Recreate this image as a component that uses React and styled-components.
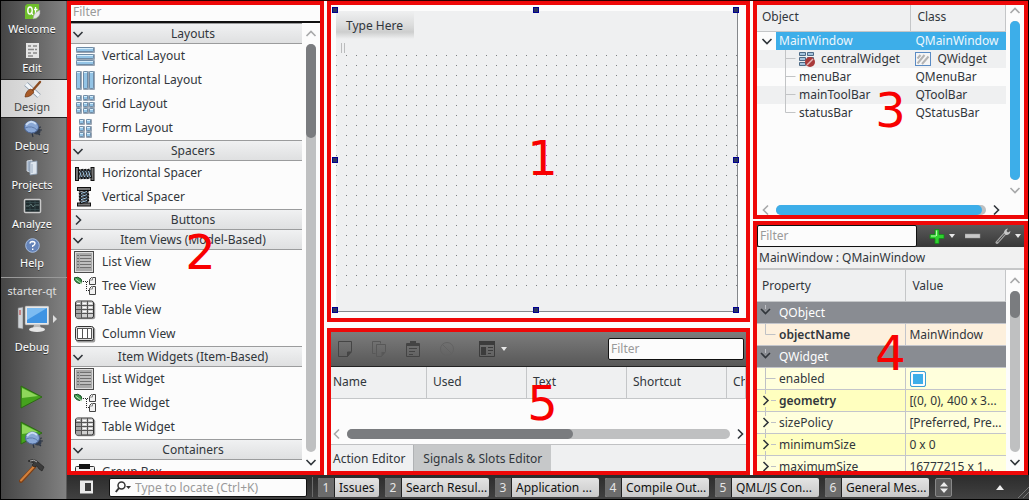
import React from "react";
import styled, { createGlobalStyle, css } from "styled-components";

const Global = createGlobalStyle`
  *, *::before, *::after { box-sizing: border-box; }
  body { margin: 0; background: #000; }
  body, button, input {
    font-family: "Noto Sans", "Open Sans", sans-serif;
    font-size: 12px;
    color: #31363b;
  }
  button { border: 0; padding: 0; background: none; text-align: left; }
  table { border-collapse: separate; border-spacing: 0; table-layout: fixed; width: 100%; }
  th { font-weight: 400; text-align: left; }
  svg { display: block; flex: none; }
`;

/* ---------- page skeleton ---------- */

const Shell = styled.div`
  display: grid;
  grid-template-columns: 67px minmax(0, 1fr);
  height: 100vh;
  min-height: 400px;
  padding-bottom: 1px;
  overflow: hidden;
`;

const Workspace = styled.main`
  display: flex;
  flex-direction: column;
  min-height: 0;
`;

const Docks = styled.div`
  flex: 1;
  min-height: 0;
  display: grid;
  grid-template-columns: 257px minmax(0, 1fr) 275px;
  gap: 3px;
  padding-top: 1px;
  background: linear-gradient(#300 0 1px, #fcfcfc 1px);
  border-right: 1px solid #000;
`;

const DockColumn = styled.div`
  display: grid;
  grid-template-rows: ${(p) => p.$rows};
  gap: ${(p) => p.$gap};
  min-height: 0;
`;

const Frame = styled.section`
  position: relative;
  display: flex;
  flex-direction: column;
  min-width: 0;
  min-height: 0;
  overflow: hidden;
  border: 4px solid #ee0808;
  background: #fcfcfc;
`;

const Callout = styled.span`
  position: absolute;
  left: ${(p) => p.$x || "50%"};
  top: ${(p) => p.$y || "50%"};
  transform: translate(-50%, -50%);
  font: 48px/56px "DejaVu Sans", sans-serif;
  color: #f80000;
  pointer-events: none;
`;

/* ---------- mode bar ---------- */

const ModeBar = styled.nav`
  display: flex;
  flex-direction: column;
  border: solid #000;
  border-width: 1px 0 0 1px;
  background: linear-gradient(90deg, #454545, #828282);
  box-shadow: inset -1px 0 #5a5a5a;
  min-height: 0;
`;

const ModeButton = styled.button`
  display: flex;
  flex-direction: column;
  align-items: center;
  justify-content: flex-end;
  height: 39px;
  padding: 0 4px 4px 0;
  color: #fff;
  line-height: 15px;
  font-size: 11px;
  text-shadow: 0 1px #333;
  ${(p) =>
    p.$active &&
    css`
      padding-bottom: 3px;
      color: #444;
      text-shadow: none;
      background: linear-gradient(90deg, #cfcfcf, #ececec);
      border: solid #222;
      border-width: 1px 0;
    `}
`;

const KitButton = styled.button`
  display: flex;
  flex-direction: column;
  align-items: center;
  gap: 6px;
  margin-top: 3px;
  padding: 5px 4px 29px 0;
  border-top: 1px solid #999;
  color: #e0e0e0;
  font-size: 11px;
  line-height: 16px;
  strong { color: #fff; font-weight: 400; text-shadow: 0 1px #333; }
`;

const KitIcon = styled.span`
  display: flex;
  align-items: center;
  gap: 4px;
  padding-left: 10px;
`;

const RunActions = styled.div`
  display: flex;
  flex-direction: column;
  align-items: center;
  gap: 10px;
  padding-right: 4px;
`;

/* ---------- shared controls ---------- */

const FilterInput = styled.input`
  display: block;
  flex: none;
  width: ${(p) => p.$width || "100%"};
  height: ${(p) => p.$height || "22px"};
  padding: 0 2px 2px;
  border: 1px solid #111;
  border-radius: 2px;
  background: #fcfcfc;
  outline: 0;
  &::placeholder { color: #9a9a9a; opacity: 1; }
`;

const Body = styled.div`
  display: flex;
  flex: 1;
  min-height: 0;
`;

const Clip = styled.div`
  flex: 1;
  min-width: 0;
  min-height: 0;
  overflow: hidden;
`;

const ScrollTrackBox = styled.div`
  display: flex;
  flex-direction: ${(p) => (p.$horizontal ? "row" : "column")};
  align-items: center;
  gap: 4px;
  flex: none;
  padding: ${(p) => p.$pad || (p.$horizontal ? "0 4px" : "5px 0 3px")};
  ${(p) => (p.$horizontal ? "height: 20px;" : "width: 18px;")}
`;

const Track = styled.div`
  flex: 1;
  display: flex;
  flex-direction: ${(p) => (p.$horizontal ? "row" : "column")};
  border-radius: 5px;
  background: #bfc0c1;
  ${(p) => (p.$horizontal ? "height: 10px;" : "width: 10px;")}
`;

const Thumb = styled.div`
  border-radius: 5px;
  background: ${(p) => (p.$blue ? "#3daee9" : "#7a7c7f")};
  flex: 0 0 ${(p) => p.$size};
`;

const chevronPaths = {
  up: "M1.5 8 L6 3.5 L10.5 8",
  down: "M1.5 4 L6 8.5 L10.5 4",
  left: "M8 1.5 L3.5 6 L8 10.5",
  right: "M4 1.5 L8.5 6 L4 10.5",
};

const Chevron = ({ dir, color = "#31363b" }) => (
  <svg width="12" height="12" viewBox="0 0 12 12" aria-hidden="true">
    <path d={chevronPaths[dir]} fill="none" stroke={color} strokeWidth="1.6" />
  </svg>
);

const Scrollbar = ({ horizontal, size, blue, atEnd, pad }) => (
  <ScrollTrackBox $horizontal={horizontal} $pad={pad}>
    <Chevron dir={horizontal ? "left" : "up"} color="#a8a9aa" />
    <Track $horizontal={horizontal}>
      <Thumb $size={size} $blue={blue} />
    </Track>
    <Chevron dir={horizontal ? "right" : "down"} color={atEnd ? "#a8a9aa" : "#31363b"} />
  </ScrollTrackBox>
);

/* ---------- widget box ---------- */

const WidgetFilter = styled(FilterInput)`
  border-width: 0 0 2px;
  border-radius: 0;
  padding-bottom: 3px;
`;

const GroupHeader = styled.button`
  display: flex;
  align-items: center;
  width: 100%;
  height: 21px;
  padding-left: 1px;
  border: solid #9b9c9d;
  border-width: 1px 0;
  background: linear-gradient(#f0f1f2, #dfe0e1);
  & + & { margin-top: -1px; }
  span { flex: 1; text-align: center; }
`;

const WidgetItem = styled.div`
  display: flex;
  align-items: center;
  gap: 6px;
  height: 24px;
  padding: 0 0 1px 3px;
`;

const Glyph = ({ children, w = 22, h = 22 }) => (
  <svg width={w} height={h} viewBox={`0 0 ${w} ${h}`} aria-hidden="true">
    {children}
  </svg>
);

const BlueCells = ({ cells }) => (
  <Glyph>
    {cells.map(([x, y, w, h]) => (
      <g key={`${x}-${y}`}>
        <rect x={x} y={y} width={w + 1} height={h + 1} rx="1" fill="#7f8ea0" opacity=".8" />
        <rect x={x + 0.5} y={y + 0.5} width={w - 1} height={h - 1} rx="1" fill="#93c4e6" stroke="#6d8aa5" />
        <path d={`M${x + 1} ${y + 1.5} h${w - 2}`} stroke="#d8eefb" />
      </g>
    ))}
  </Glyph>
);

const verticalCells = [2, 9, 15].map((y) => [2, y, 18, 5]);
const horizontalCells = [2, 9, 15].map((x) => [x, 2, 5, 18]);
const gridCells = [2, 9, 15].flatMap((y) => [2, 9, 15].map((x) => [x, y, 5, 5]));
const formCells = [2, 9, 15].flatMap((y) => [5, 12].map((x) => [x, y, 5, 5]));

const Spring = () => (
  <>
    <rect x="2.5" y="5.5" width="3" height="13" fill="#777" stroke="#111" />
    <rect x="18" y="5.5" width="3" height="13" fill="#777" stroke="#111" />
    <path d="M6 7.5 L9 17 M9 7 L12 17 M12 7 L15 17 M15 7 L18 16" stroke="#111" strokeWidth="2.6" />
    <path d="M6.5 17 L9 8 M9.5 17 L12 8 M12.5 17 L15 8 M15.5 17 L17.5 8" stroke="#29343f" strokeWidth="1.2" />
    <path d="M6.5 9 L8.5 15 M9.6 9 L11.6 15 M12.7 9 L14.7 15 M15.5 9 L17.4 15" stroke="#a9cde8" />
  </>
);

const icons = {
  vertical: <BlueCells cells={verticalCells} />,
  horizontal: <BlueCells cells={horizontalCells} />,
  grid: <BlueCells cells={gridCells} />,
  form: <BlueCells cells={formCells} />,
  hspacer: <Glyph><g transform="translate(-1 0)"><Spring /></g></Glyph>,
  vspacer: <Glyph><g transform="translate(-1 0) rotate(90 11 11) translate(-1 -1)"><Spring /></g></Glyph>,
  list: (
    <Glyph>
      <rect x=".5" y=".5" width="19" height="21" fill="#a9a9a9" stroke="#4c4c4c" />
      <rect x="1.5" y="1.5" width="17" height="19" fill="none" stroke="#dcdcdc" />
      <path d="M3 4.5h2M3 7.5h2M3 10.5h2M3 13.5h2M3 16.5h2M6 4.5h11M6 7.5h11M6 10.5h11M6 13.5h11M6 16.5h11" stroke="#707070" />
      <path d="M6 6h11M6 9h11M6 12h11M6 15h11" stroke="#d2d2d2" />
    </Glyph>
  ),
  tree: (
    <Glyph>
      <path d="M0 3 Q4 1 7 4 Q9 7 6 8.5 Q1 8 0 3Z" fill="#3f9c4e" stroke="#174b22" />
      <path d="M1.5 4 L8 9" stroke="#b7e5b8" />
      <path d="M9 6.5h6M12.5 7v9M12 15.5h3" fill="none" stroke="#222" strokeDasharray="1 1" />
      <path d="M15.5 4.5 l2-2 h4 v7 h-6z M15.5 13.5 l2-2 h4 v8 h-6z" fill="#f2f2f2" stroke="#444" />
      <path d="M18.5 2v3h-3M18.5 11v3h-3" fill="none" stroke="#888" />
    </Glyph>
  ),
  table: (
    <Glyph>
      <rect x="2.2" y="3.2" width="19" height="17" rx="2" fill="#999" />
      <rect x="1.5" y="2" width="18" height="17" rx="2" fill="#d0d0d0" stroke="#333" />
      <rect x="2" y="2.5" width="5" height="16" fill="#a6a6a6" />
      <path d="M2 6.5h17M2 10.5h17M2 14.5h17M7.5 2v17M13.5 2v17" stroke="#555" />
      <path d="M3 4.5h3M9 4.5h3M15 4.5h3M9 8.5h3M15 8.5h3M9 12.5h3M15 12.5h3" stroke="#fff" />
    </Glyph>
  ),
  column: (
    <Glyph>
      <rect x="2.2" y="4.5" width="19" height="15" rx="2" fill="#999" />
      <rect x="1.5" y="3.5" width="18" height="14" rx="2" fill="#e0e0e0" stroke="#333" />
      <rect x="3.5" y="5.5" width="14" height="10" fill="#fff" stroke="#555" />
      <path d="M8.5 6v9M13.5 6v9" stroke="#555" />
    </Glyph>
  ),
  group: (
    <Glyph>
      <rect x="1.5" y="5.5" width="19" height="15" rx="1" fill="#eee" stroke="#333" />
      <rect x="5" y="3" width="11" height="5" fill="#111" />
    </Glyph>
  ),
};

const widgetGroups = [
  { title: "Layouts", items: [["vertical", "Vertical Layout"], ["horizontal", "Horizontal Layout"], ["grid", "Grid Layout"], ["form", "Form Layout"]] },
  { title: "Spacers", items: [["hspacer", "Horizontal Spacer"], ["vspacer", "Vertical Spacer"]] },
  { title: "Buttons", closed: true, items: [] },
  { title: "Item Views (Model-Based)", items: [["list", "List View"], ["tree", "Tree View"], ["table", "Table View"], ["column", "Column View"]] },
  { title: "Item Widgets (Item-Based)", items: [["list", "List Widget"], ["tree", "Tree Widget"], ["table", "Table Widget"]] },
  { title: "Containers", items: [["group", "Group Box"]] },
];

const WidgetBox = () => (
  <Frame aria-label="Widget box">
    <WidgetFilter $height="18px" placeholder="Filter" aria-label="Filter widgets" />
    <Body>
      <Clip>
        {widgetGroups.map((g) => (
          <React.Fragment key={g.title}>
            <GroupHeader aria-expanded={!g.closed}>
              <Chevron dir={g.closed ? "right" : "down"} />
              <span>{g.title}</span>
            </GroupHeader>
            {g.items.map(([icon, label]) => (
              <WidgetItem key={label}>
                {icons[icon]}
                {label}
              </WidgetItem>
            ))}
          </React.Fragment>
        ))}
      </Clip>
      <Scrollbar size="23%" />
    </Body>
    <Callout $x="52%" $y="53%">2</Callout>
  </Frame>
);

/* ---------- form canvas ---------- */

const Canvas = styled.div`
  position: relative;
  flex: 1;
  display: flex;
  flex-direction: column;
  margin: 6px 8px 6px 5px;
  border: solid #85888c;
  border-width: 0 1px 1px 0;
  background: #eff0f1;
`;

const TypeHere = styled.button`
  align-self: flex-start;
  height: 28px;
  padding: 0 11px 0 10px;
  background: linear-gradient(#eff0f1, #dcdddd 50%, #cdcece 75%, #eff0f1);
`;

const ToolGrip = styled.div`
  width: 4px;
  height: 10px;
  margin: 4px 5px 2px;
  border: solid #bbbcbd;
  border-width: 0 1px;
`;

const DotPattern = styled.svg`
  flex: 1;
  width: 100%;
  min-height: 0;
  margin-bottom: 24px;
`;

const Handle = styled.i`
  position: absolute;
  left: ${(p) => p.$x};
  top: ${(p) => p.$y};
  width: 6px;
  height: 6px;
  margin: -4px 0 0 -4px;
  background: #2b3560;
  border: 1px solid #000090;
`;

const handleSpots = [
  ["0%", "0%"], ["50%", "0%"], ["100%", "0%"], ["0%", "50%"],
  ["100%", "50%"], ["0%", "100%"], ["50%", "100%"], ["100%", "100%"],
];

const FormEditor = () => (
  <Frame aria-label="Form editor">
    <Canvas>
      <TypeHere>Type Here</TypeHere>
      <ToolGrip />
      <DotPattern aria-hidden="true">
        <defs>
          <pattern id="dots" width="10" height="10" patternUnits="userSpaceOnUse">
            <rect width="1" height="1" fill="#7c7f82" />
          </pattern>
        </defs>
        <rect width="100%" height="100%" fill="url(#dots)" />
      </DotPattern>
      {handleSpots.map(([x, y]) => (
        <Handle key={x + y} $x={x} $y={y} />
      ))}
    </Canvas>
    <Callout $x="51%" $y="49%">1</Callout>
  </Frame>
);

/* ---------- action editor ---------- */

const ActionToolbar = styled.div`
  display: flex;
  align-items: center;
  gap: 18px;
  height: 35px;
  flex: none;
  padding: 0 2px 0 6px;
  border-bottom: 1px solid #222;
  background: linear-gradient(#7c7c7c, #585858);
`;

const ToolButton = styled.button`
  display: flex;
  align-items: center;
  gap: ${(p) => p.$gap || "4px"};
`;

const Spacer = styled.span`
  flex: 1;
`;

const Th = styled.th`
  width: ${(p) => p.$width || "auto"};
  height: ${(p) => p.$height || "32px"};
  padding: ${(p) => p.$pad || "0 0 2px 6px"};
  border: solid #c4c6c8;
  border-width: 0 1px 1px 0;
  background: #eff0f1;
  white-space: nowrap;
`;

const Tabs = styled.div`
  display: flex;
  height: 27px;
  flex: none;
  border-top: 1px solid #c0c1c3;
  background: #eff0f1;
`;

const Tab = styled.button`
  padding: ${(p) => (p.$active ? "0 8px 0 2px" : "0 9px")};
  background: ${(p) => (p.$active ? "#eff0f1" : "#c6c8c9")};
  border-left: ${(p) => (p.$active ? "0" : "1px solid #b0b2b4")};
`;

const ActionArea = styled.div`
  flex: 1;
`;

const Caret = ({ color = "#e8e8e8" }) => (
  <svg width="6" height="4" viewBox="0 0 6 4" aria-hidden="true">
    <path d="M0 0h6L3 4z" fill={color} />
  </svg>
);

const ActionEditor = () => (
  <Frame aria-label="Action editor">
    <ActionToolbar>
      <ToolButton aria-label="New action">
        <Glyph w={16} h={16}><path d="M1.5.5h13v10l-4 5h-9z M10.5 15.5v-4.5h4" fill="none" stroke="#454545" /><path d="M10.5 11h4l-4 4.5z" fill="#454545" /></Glyph>
      </ToolButton>
      <ToolButton aria-label="Copy">
        <Glyph w={16} h={16}><path d="M1.5.5h8v2M1.5.5v12h3M5.5 3.5h9v7l-4 5h-5z" fill="none" stroke="#585858" /><path d="M10.5 11h4l-4 4.5z" fill="#585858" /></Glyph>
      </ToolButton>
      <ToolButton aria-label="Paste">
        <Glyph w={16} h={16}><path d="M1.5 2.5h13v13h-13z" fill="none" stroke="#444" /><path d="M2 2h3V0h6v2h3v3H2z" fill="#444" /><path d="M4 7.5h8M4 10.5h6M4 13.5h4" stroke="#444" /></Glyph>
      </ToolButton>
      <ToolButton aria-label="Delete">
        <Glyph w={16} h={16}><circle cx="8" cy="8" r="6.5" fill="none" stroke="#626262" /><path d="M3.5 3.5l9 9" stroke="#626262" /></Glyph>
      </ToolButton>
      <ToolButton aria-label="Configure" $gap="6px">
        <Glyph w={22} h={16}><path d="M6.5 .5h15v15h-15z" fill="none" stroke="#3c3c3c" /><path d="M6 0h16v4H6zM8 6h5v8H8z" fill="#3c3c3c" /><path d="M15 6.5h5M15 9.5h5M15 12.5h3" stroke="#3c3c3c" /></Glyph>
        <Caret />
      </ToolButton>
      <Spacer />
      <FilterInput $width="136px" placeholder="Filter" aria-label="Filter actions" />
    </ActionToolbar>
    <table>
      <thead>
        <tr>
          <Th $width="96px" $pad="0 0 2px 2px">Name</Th>
          <Th $width="100px">Used</Th>
          <Th $width="100px">Text</Th>
          <Th $width="100px">Shortcut</Th>
          <Th><Clip>Checkable</Clip></Th>
        </tr>
      </thead>
    </table>
    <ActionArea />
    <Scrollbar horizontal size="59%" pad="0" />
    <Tabs role="tablist">
      <Tab $active role="tab" aria-selected="true">Action Editor</Tab>
      <Tab role="tab" aria-selected="false">Signals &amp; Slots Editor</Tab>
    </Tabs>
    <Callout $x="51%" $y="51%">5</Callout>
  </Frame>
);

/* ---------- object inspector ---------- */

const ObjectRow = styled.tr`
  background: ${(p) => (p.$alt ? "#eff0f1" : "#fcfcfc")};
`;

const ObjectCell = styled.td`
  height: 18px;
  padding: 0;
  white-space: nowrap;
  ${(p) => p.$selected && css`background: #3daee9; color: #eef7fc;`}
`;

const CellLine = styled.div`
  display: flex;
  align-items: center;
  gap: ${(p) => p.$gap || "0"};
  height: 18px;
  line-height: 16px;
  padding-left: ${(p) => p.$indent || "0"};
`;

const Expander = styled.span`
  display: flex;
  align-items: center;
  justify-content: center;
  width: 19px;
`;

const SelectedName = styled.span`
  flex: 1;
  height: 18px;
  padding-left: 3px;
  line-height: 18px;
  background: #3daee9;
  color: #eef7fc;
`;

const Branch = ({ last }) => (
  <svg width="20" height="18" viewBox="0 0 20 18" aria-hidden="true">
    <path d={last ? "M9.5 0v8.5h10" : "M9.5 0v18M9.5 8.5h10"} fill="none" stroke="#c2c4c6" />
  </svg>
);

const NoLayoutIcon = () => (
  <Glyph w={16} h={16}>
    <path d="M.5 1.5h6v3h-6zM8.5 1.5h6v3h-6zM.5 6.5h6v3h-6zM8.5 6.5h6v3h-6zM.5 11.5h6v3h-6z" fill="#a5c3dc" stroke="#4c6a86" />
    <circle cx="11" cy="11" r="5" fill="#a93a3a" />
    <path d="M8 14l6-6" stroke="#e4b5b5" strokeWidth="1.5" />
  </Glyph>
);

const WidgetIcon = () => (
  <Glyph w={16} h={14}>
    <rect x=".5" y=".5" width="15" height="13" fill="#f5f5f5" stroke="#5a8bc4" />
    <path d="M2.5 11.500L9.500 3M7 12L13.500 4.500M2.500 6.500l3-3.500" stroke="#b4b4b4" strokeWidth="2" />
  </Glyph>
);

const objects = [
  { name: "centralWidget", type: "QWidget", icons: true },
  { name: "menuBar", type: "QMenuBar" },
  { name: "mainToolBar", type: "QToolBar" },
  { name: "statusBar", type: "QStatusBar" },
];

const InspectorFoot = styled.div`
  display: flex;
  flex-direction: column;
  justify-content: center;
  height: 11px;
  flex: none;
  margin-right: 18px;
`;

const ObjectInspector = () => (
  <Frame aria-label="Object inspector">
    <Body>
      <Clip>
        <table>
          <thead>
            <tr>
              <Th $width="62%" $height="27px" $pad="0 0 4px 5px">Object</Th>
              <Th $height="27px" $pad="0 0 4px 6px">Class</Th>
            </tr>
          </thead>
          <tbody>
            <ObjectRow>
              <ObjectCell>
                <CellLine>
                  <Expander><Chevron dir="down" /></Expander>
                  <SelectedName>MainWindow</SelectedName>
                </CellLine>
              </ObjectCell>
              <ObjectCell $selected><CellLine $indent="4px">QMainWindow</CellLine></ObjectCell>
            </ObjectRow>
            {objects.map((o, i) => (
              <ObjectRow key={o.name} $alt={i % 2 === 0}>
                <ObjectCell>
                  <CellLine $indent="19px">
                    <Branch last={i === objects.length - 1} />
                    <CellLine $indent="3px" $gap="6px">{o.icons && <NoLayoutIcon />}{o.name}</CellLine>
                  </CellLine>
                </ObjectCell>
                <ObjectCell><CellLine $indent="4px" $gap="6px">{o.icons && <WidgetIcon />}{o.type}</CellLine></ObjectCell>
              </ObjectRow>
            ))}
          </tbody>
        </table>
      </Clip>
      <Scrollbar size="100%" blue atEnd pad="0 0 8px" />
    </Body>
    <InspectorFoot><Scrollbar horizontal size="98%" blue pad="0 4px 0 3px" /></InspectorFoot>
    <Callout>3</Callout>
  </Frame>
);

/* ---------- property editor ---------- */

const PropertyToolbar = styled.div`
  display: flex;
  align-items: center;
  gap: 10px;
  height: 22px;
  flex: none;
  padding-right: 3px;
  background: linear-gradient(#5a5a5a, #383838);
  & > button:last-child { margin-left: auto; }
`;

const ObjectLabel = styled.div`
  height: 23px;
  flex: none;
  padding-left: 2px;
  line-height: 20px;
  border-top: 1px solid #eee;
  border-bottom: 2px solid #c6c7c8;
  background: #f1f1f1;
`;

const tones = {
  group: "#898c92",
  peach: "#fdf0dd",
  light: "#ffffdc",
  dark: "#ffffbf",
};

const PropertyCell = styled.td`
  height: 22px;
  padding: 0;
  border-bottom: 1px solid #c3c5cb;
  border-right: ${(p) => (p.$split ? "1px solid #c3c5cb" : "0")};
  background: ${(p) => tones[p.$tone]};
  color: ${(p) => (p.$tone === "group" ? "#fff" : "#31363b")};
  font-weight: ${(p) => (p.$bold ? 600 : 400)};
  white-space: nowrap;
  overflow: hidden;
`;

const PropertyName = styled.div`
  display: flex;
  align-items: center;
  height: 21px;
`;

const ValueCell = styled(PropertyCell)`
  padding-left: 3px;
`;

const EnabledBox = styled.input`
  appearance: none;
  display: block;
  width: 16px;
  height: 16px;
  margin: 0 0 0 1px;
  border: 1px solid #3d9fd3;
  border-radius: 2px;
  background: #3daee9;
  box-shadow: inset 0 0 0 2px #fcfcfc;
`;

const PropertyBranch = ({ kind }) => (
  <svg width="22" height="21" viewBox="0 0 22 21" aria-hidden="true">
    {kind === "last" && <path d="M8.5 0v10.5h10" fill="none" stroke="#bfc1c5" />}
    {kind === "leaf" && <path d="M8.5 0v21M8.5 10.5h10" fill="none" stroke="#bfc1c5" />}
    {kind === "closed" && (
      <>
        <path d="M8.5 0v4M8.5 17v4M14 10.5h5" fill="none" stroke="#bfc1c5" />
        <path d="M6.5 6l4.5 4.5L6.5 15" fill="none" stroke="#31363b" strokeWidth="1.6" />
      </>
    )}
    {kind === "open" && (
      <>
        <path d="M8.5 3v4" stroke="#bfc1c5" />
        <path d="M4 7l4.5 4.5L13 7" fill="none" stroke="#31363b" strokeWidth="1.6" />
      </>
    )}
  </svg>
);

const properties = [
  { name: "QObject", tone: "group", kind: "open" },
  { name: "objectName", value: "MainWindow", tone: "peach", kind: "last", bold: true },
  { name: "QWidget", tone: "group", kind: "open" },
  { name: "enabled", check: true, tone: "light", kind: "leaf" },
  { name: "geometry", value: "[(0, 0), 400 x 3...", tone: "dark", kind: "closed", bold: true },
  { name: "sizePolicy", value: "[Preferred, Pre...", tone: "light", kind: "closed" },
  { name: "minimumSize", value: "0 x 0", tone: "dark", kind: "closed" },
  { name: "maximumSize", value: "16777215 x 1...", tone: "light", kind: "closed" },
];

const PropertyEditor = () => (
  <Frame aria-label="Property editor">
    <PropertyToolbar>
      <FilterInput $width="160px" placeholder="Filter" aria-label="Filter properties" />
      <ToolButton aria-label="Add property">
        <Glyph w={18} h={16}><path d="M8 1.5h4v5h5v4h-5v5H8v-5H3v-4h5z" fill="#2fd02f" stroke="#128a18" strokeWidth=".8" /><path d="M9.5 2.5v5.500M4 8h5" stroke="#b6f9ae" strokeWidth="1.200" /></Glyph>
        <Caret />
      </ToolButton>
      <ToolButton aria-label="Remove property">
        <Glyph w={16} h={16}><rect x="0" y="6" width="15" height="4" fill="#c9c9c9" stroke="#999" strokeWidth=".5" /></Glyph>
      </ToolButton>
      <ToolButton aria-label="Configure">
        <Glyph w={16} h={16}><path d="M2 14.5L10 5.5" stroke="#a5a5a5" strokeWidth="3" strokeLinecap="round" /><path d="M2.5 14L10 5.5" stroke="#4a4a4a" /><path d="M9 5Q9 1 13 .5L11.5 3l1.5 1.5L15.5 3Q15 7 11 7Z" fill="#c9c9c9" /></Glyph>
        <Caret />
      </ToolButton>
    </PropertyToolbar>
    <ObjectLabel>MainWindow : QMainWindow</ObjectLabel>
    <Body>
      <Clip>
        <table>
          <thead>
            <tr>
              <Th $width="60%" $pad="0 0 0 5px">Property</Th>
              <Th $pad="0 0 0 6px">Value</Th>
            </tr>
          </thead>
          <tbody>
            {properties.map((p) => (
              <tr key={p.name}>
                <PropertyCell $tone={p.tone} $bold={p.bold} $split={p.tone !== "group"}>
                  <PropertyName>
                    <PropertyBranch kind={p.kind} />
                    {p.check ? <label htmlFor="enabled">{p.name}</label> : p.name}
                  </PropertyName>
                </PropertyCell>
                <ValueCell $tone={p.tone}>
                  {p.check ? <EnabledBox id="enabled" type="checkbox" defaultChecked /> : p.value}
                </ValueCell>
              </tr>
            ))}
          </tbody>
        </table>
      </Clip>
      <Scrollbar size="17%" />
    </Body>
    <Callout $y="52%">4</Callout>
  </Frame>
);

/* ---------- status bar ---------- */

const StatusBar = styled.footer`
  display: flex;
  align-items: center;
  gap: 5px;
  height: 24px;
  flex: none;
  background: linear-gradient(#2c2c2c, #414141);
`;

const SidebarToggle = styled.button`
  padding: 0 10px 0 12px;
`;

const Locator = styled.label`
  display: flex;
  align-items: center;
  gap: 4px;
  width: 198px;
  height: 19px;
  padding-left: 5px;
  border: 1px solid #111;
  border-radius: 2px;
  background: #fcfcfc;
`;

const LocatorInput = styled.input`
  flex: 1;
  min-width: 0;
  padding: 0;
  border: 0;
  outline: 0;
  background: none;
  &::placeholder { color: #9a9a9a; opacity: 1; }
`;

const Divider = styled.span`
  width: 1px;
  height: 20px;
  background: #6b6b6b;
`;

const Outputs = styled.div`
  display: flex;
  gap: 6px;
`;

const OutputButton = styled.button`
  display: flex;
  width: ${(p) => p.$width};
  height: 19px;
  border-radius: 2px;
  overflow: hidden;
  line-height: 19px;
  white-space: nowrap;
  color: #111;
  background: linear-gradient(#e4e4e4, #c9c9c9);
  span {
    width: 17px;
    margin-right: 4px;
    flex: none;
    text-align: center;
    color: #e6e6e6;
    background: #6c6c6c;
    border-right: 1px solid #222;
  }
`;

const MoreButton = styled.button`
  display: grid;
  place-items: center;
  width: 17px;
  height: 19px;
  border: 1px solid #888;
  border-radius: 2px;
  background: #5c5c5c;
`;

const GripWrap = styled.span`
  display: flex;
  align-items: center;
  gap: 14px;
`;

const outputs = ["Issues", "Search Resul...", "Application ...", "Compile Out...", "QML/JS Con...", "General Mes..."];

const Status = () => (
  <StatusBar>
    <SidebarToggle aria-label="Toggle sidebar">
      <Glyph w={15} h={14}><rect x="1" y=".5" width="13" height="13" fill="#eaeaea" /><rect x="6" y="3" width="6" height="8" fill="#3c3c3c" /></Glyph>
    </SidebarToggle>
    <Locator>
      <Glyph w={16} h={12}><circle cx="6.5" cy="4.5" r="3.5" fill="none" stroke="#333" strokeWidth="1.5" /><path d="M4 7L.8 11" stroke="#333" strokeWidth="2" /><path d="M11 5h5l-2.5 3z" fill="#333" /></Glyph>
      <LocatorInput placeholder="Type to locate (Ctrl+K)" aria-label="Locate" />
    </Locator>
    <Divider />
    <Outputs>
      {outputs.map((name, i) => (
        <OutputButton key={name} $width={i === 0 ? "61px" : "104px"}>
          <span>{i + 1}</span>
          {name}
        </OutputButton>
      ))}
      <MoreButton aria-label="More panes">
        <Glyph w={8} h={11}><path d="M0 4.5h8L4 0zM0 6.5h8L4 11z" fill="#eee" /></Glyph>
      </MoreButton>
    </Outputs>
    <Spacer />
    <GripWrap>
      <Glyph w={8} h={5}><path d="M0 5h8L4 0z" fill="#eee" /></Glyph>
      <Glyph w={11} h={22}><path d="M0 22L11 11M5 22L11 16" stroke="#777" /></Glyph>
    </GripWrap>
  </StatusBar>
);

/* ---------- mode bar content ---------- */

const Beetle = () => (
  <>
    <path d="M13 9l5-1M13 13l4 3M9 14l1 4M15 11h4" stroke="#2c3442" strokeWidth="1.2" />
    <ellipse cx="14" cy="12" rx="3.5" ry="3.5" fill="#333d4d" />
    <ellipse cx="8.5" cy="8" rx="7" ry="6" fill="#8aa8d6" stroke="#4a6596" />
    <path d="M3 6Q8 0 13 5" fill="none" stroke="#c9dbf3" strokeWidth="2" />
    <path d="M2 9Q9 6 14 11" fill="none" stroke="#5f7cab" />
  </>
);

const modes = [
  ["Welcome", <><path d="M4 2h12v12l-3 3H2V4z" fill="#6fbf2c" /><ellipse cx="7" cy="8.5" rx="2.2" ry="3.5" fill="none" stroke="#fff" strokeWidth="1.4" /><path d="M8 10l2 3M12.5 5v7M11 7.5h3.5" stroke="#fff" strokeWidth="1.3" /><path d="M17 8Q18 16 10 17Q10 11 17 8z" fill="#e4e4e4" stroke="#999" strokeWidth=".5" /></>],
  ["Edit", <><rect x="3" y="2" width="13" height="15" fill="#e4e4e4" /><path d="M5 5h3M5 8.5h6M5 12h3M5 15h5M10 5h4M12 8.5h2M10 12h4" stroke="#888" strokeWidth="1.5" /></>],
  ["Design", <><path d="M3 4l13 12" stroke="#8494a6" strokeWidth="5" /><path d="M3 4l13 12" stroke="#f2f6fa" strokeWidth="3.5" /><path d="M10 10L17 2" stroke="#8c4b20" strokeWidth="2.4" strokeLinecap="round" /><path d="M2 17Q3 10 8 9l3 3Q8 17 2 17z" fill="#a95a27" stroke="#6c3513" strokeWidth=".7" /></>],
  ["Debug", <Beetle />],
  ["Projects", <><path d="M4 3l5-1v13l-5-2z" fill="#9fb0c5" stroke="#e2e8ef" strokeWidth=".8" /><path d="M7 4l7-1v13l-7 1z" fill="#dde5ee" stroke="#8495a9" strokeWidth=".8" /><path d="M9 6v9" stroke="#9eb0c4" /></>],
  ["Analyze", <><rect x="1.5" y="2.5" width="16" height="13" rx="1" fill="#1f2b2e" stroke="#c9c9c9" strokeWidth="1.5" /><path d="M3 9h3l2-2 2 3 2-2h4" fill="none" stroke="#5f7775" /><path d="M3 5.5h13M3 12.5h13M7 4v10M12 4v10" stroke="#40575a" strokeWidth=".6" /></>],
  ["Help", <><circle cx="9.5" cy="9.5" r="6.8" fill="#6483b8" stroke="#a8bfe3" /><path d="M7 7.5Q7.2 5.5 9.5 5.5Q12 5.6 12 7.5Q11.8 9 9.7 9.8V11M9.7 12.5v1.6" fill="none" stroke="#fff" strokeWidth="1.4" /></>],
];

const Play = () => (
  <>
    <path d="M2 2L23 13L2 24z" fill="#45a31d" stroke="#2c6a13" />
    <path d="M3 4L19 12L3 14z" fill="#8ed75b" />
  </>
);

const Modes = () => (
  <ModeBar>
    {modes.map(([label, art]) => (
      <ModeButton key={label} $active={label === "Design"}>
        <Glyph w={19} h={19}>{art}</Glyph>
        {label}
      </ModeButton>
    ))}
    <KitButton>
      <span>starter-qt</span>
      <KitIcon>
        <Glyph w={32} h={28}>
          <path d="M1 3l5-1v22l-5-1z" fill="#cfd3d7" stroke="#777" strokeWidth=".6" />
          <path d="M3 5v5" stroke="#b33" />
          <rect x="8" y="1" width="24" height="19" rx="1" fill="#e8e8e8" stroke="#888" strokeWidth=".6" />
          <rect x="10" y="3" width="20" height="15" fill="#3f94e3" />
          <path d="M10 3h20L10 15z" fill="#7cbcf2" />
          <path d="M17 20h6l1 3h-8z" fill="#bbb" />
          <ellipse cx="20" cy="24.5" rx="8" ry="2.5" fill="#e6e6e6" />
        </Glyph>
        <svg width="4" height="8" viewBox="0 0 4 8" aria-hidden="true"><path d="M0 0l4 4-4 4z" fill="#ddd" /></svg>
      </KitIcon>
      <strong>Debug</strong>
    </KitButton>
    <RunActions>
      <ToolButton aria-label="Run"><Glyph w={26} h={26}><Play /></Glyph></ToolButton>
      <ToolButton aria-label="Start debugging">
        <Glyph w={26} h={28}><Play /><g transform="translate(5 10)"><Beetle /></g></Glyph>
      </ToolButton>
      <ToolButton aria-label="Build">
        <Glyph w={26} h={26}>
          <path d="M2 23L15 9" stroke="#7c3f16" strokeWidth="4" strokeLinecap="round" />
          <path d="M2 22.5L15 8.5" stroke="#d3813c" strokeWidth="2" strokeLinecap="round" />
          <path d="M9 3Q15 0 19 4L25 9L23 13L20 11L18 8L15 9L13 7L15 5z" fill="#3b3b3b" stroke="#1d1d1d" strokeWidth=".6" />
          <path d="M11 3Q15 1 18 4" fill="none" stroke="#aaa" />
        </Glyph>
      </ToolButton>
    </RunActions>
  </ModeBar>
);

export default function App() {
  return (
    <>
      <Global />
      <Shell>
        <Modes />
        <Workspace>
          <Docks>
            <WidgetBox />
            <DockColumn $rows="minmax(0, 1fr) 147px" $gap="6px">
              <FormEditor />
              <ActionEditor />
            </DockColumn>
            <DockColumn $rows="minmax(0, 218fr) minmax(0, 254fr)" $gap="2px">
              <ObjectInspector />
              <PropertyEditor />
            </DockColumn>
          </Docks>
          <Status />
        </Workspace>
      </Shell>
    </>
  );
}
